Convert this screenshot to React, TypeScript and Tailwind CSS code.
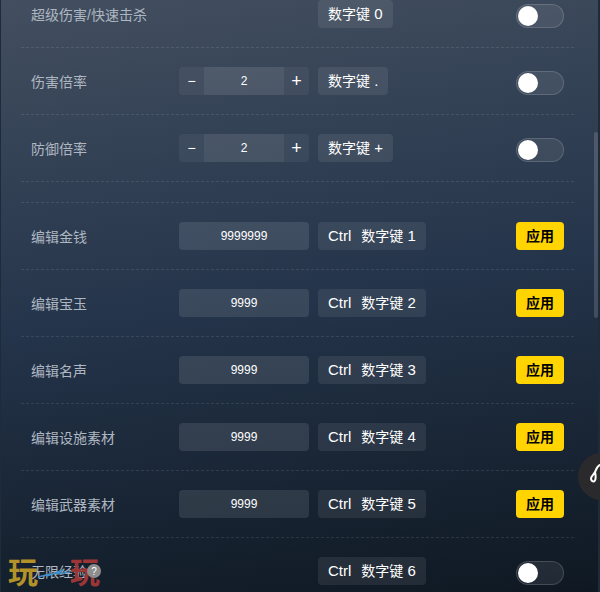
const font = "[font-family:'Liberation_Sans','Noto_Sans_CJK_SC',sans-serif]";

function Key({ ctrl, k }: { ctrl?: boolean; k: string }) {
  return (
    <div className="h-[28px] px-[10px] flex items-center gap-[10px] rounded bg-white/[0.08] text-[15px] text-white">
      {ctrl && <span>Ctrl</span>}
      <span className="whitespace-pre">
        <span className="text-[14px]">数字键</span> {k}
      </span>
    </div>
  );
}

function Toggle() {
  return (
    <div className="self-end ml-auto mr-[10px] w-[48px] h-[24px] rounded-full border border-white/15 bg-white/[0.08] flex items-center pl-[1px]">
      <div className="w-[20px] h-[20px] rounded-full bg-white" />
    </div>
  );
}

function Apply() {
  return (
    <button className="ml-auto mr-[10px] w-[48px] h-[28px] rounded bg-[#ffd400] text-[14px] font-bold text-black">
      应用
    </button>
  );
}

function Row({ label, children, first }: { label: string; children: React.ReactNode; first?: boolean }) {
  return (
    <div className={`flex items-center ml-[21px] mr-[26px] pl-[10px] pb-[19px] border-b border-dashed border-white/10 ${first ? "" : "pt-[19px]"}`}>
      <div className="w-[148px] pt-[2px] text-[14px] text-[#aeb7c1]">{label}</div>
      {children}
    </div>
  );
}

function Stepper() {
  return (
    <div className="w-[130px] h-[28px] mr-[9px] flex rounded bg-white/[0.05] text-white items-center">
      <span className="w-[25px] text-center text-[14px]">−</span>
      <span className="w-[80px] h-full bg-white/[0.06] flex items-center justify-center text-[12px]">2</span>
      <span className="w-[25px] text-center text-[18px]">+</span>
    </div>
  );
}

function NumInput({ value }: { value: string }) {
  return (
    <div className="w-[130px] h-[28px] mr-[9px] rounded bg-white/10 flex items-center justify-center text-[12px] text-white">
      {value}
    </div>
  );
}

const edits = [
  ["编辑金钱", "9999999", "1"],
  ["编辑宝玉", "9999", "2"],
  ["编辑名声", "9999", "3"],
  ["编辑设施素材", "9999", "4"],
  ["编辑武器素材", "9999", "5"],
];

export default function App() {
  return (
    <div className={`relative h-[592px] w-[600px] overflow-hidden bg-[linear-gradient(172deg,#434f60_0%,#24344a_50%,#0f1822_100%)] ${font}`}>
      <Row label="超级伤害/快速击杀" first>
        <div className="ml-[139px]"><Key k="0" /></div>
        <Toggle />
      </Row>
      <Row label="伤害倍率">
        <Stepper />
        <Key k="." />
        <Toggle />
      </Row>
      <Row label="防御倍率">
        <Stepper />
        <Key k="+" />
        <Toggle />
      </Row>
      <div className="h-[21px] ml-[21px] mr-[26px] border-b border-dashed border-white/10" />
      {edits.map(([label, value, k]) => (
        <Row key={label} label={label}>
          <NumInput value={value} />
          <Key ctrl k={k} />
          <Apply />
        </Row>
      ))}
      <Row label="无限经验">
        <div className="ml-[139px]"><Key ctrl k="6" /></div>
        <Toggle />
      </Row>

      {/* window edges */}
      <div className="absolute left-0 top-0 w-[1px] h-full bg-[#1d2b3a]" />
      <div className="absolute right-0 top-0 w-[2px] h-full bg-[#1d2b3a]" />
      {/* scrollbar */}
      <div className="absolute left-[594px] top-[132px] w-[4px] h-[186px] bg-white/15 rounded" />
      {/* floating button */}
      <div className="absolute left-[578px] top-[453px] w-[47px] h-[47px] rounded-full bg-[#2a2a2c]" />
      <svg className="absolute left-[585px] top-[458px]" width="15" height="30" viewBox="0 0 15 30" fill="none" stroke="#fff" strokeWidth="2" strokeLinecap="round">
        <path d="M15 7C12 8 11 12 10 14L6.500 19C5.500 21 6.500 23.500 8.500 23.500C11 23.500 11 18 10 14" />
      </svg>
      {/* watermark */}
      <div className="absolute left-[8px] top-[555px] flex items-center text-[30px] leading-[36px] font-bold pointer-events-none">
        <span className="text-[#b3922a]">玩</span>
        <svg width="32" height="20" viewBox="0 0 32 20" fill="none" stroke="#3f8fc8" strokeWidth="1.500">
          <path d="M0 14L12 11L9 13L25 7L19 11L32 9" />
        </svg>
        <span className="text-[#9c3636]">玩</span>
      </div>
      <div className="absolute left-[87px] top-[564px] w-[14px] h-[14px] rounded-full bg-[#8d8d8d] flex items-center justify-center text-[10px] text-white">?</div>
    </div>
  );
}
